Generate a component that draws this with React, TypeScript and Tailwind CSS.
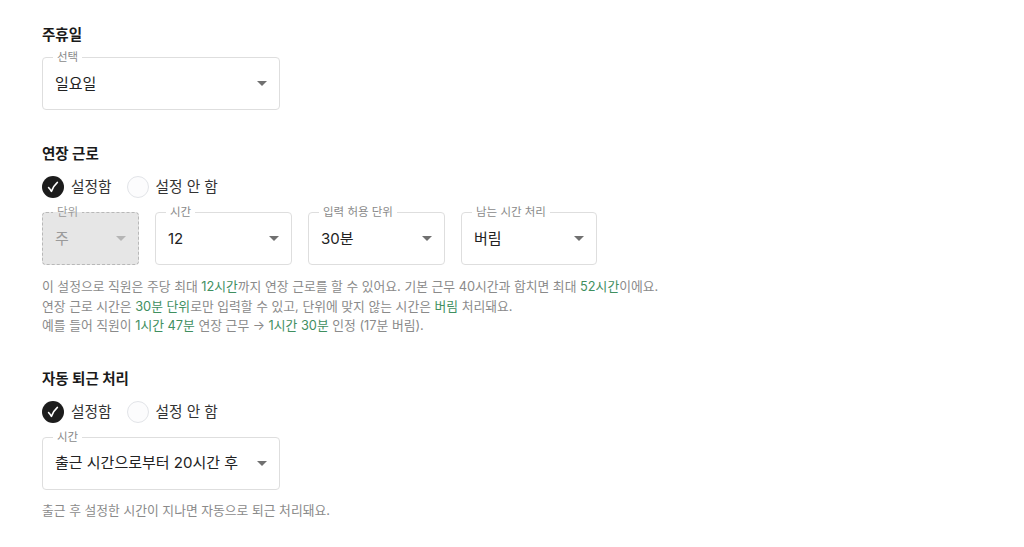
import React from "react";

type SelectProps = {
  label: string;
  value: string;
  width: string;
  disabled?: boolean;
};

function Arrow({ disabled }: { disabled?: boolean }) {
  return (
    <svg width="10" height="5" viewBox="0 0 10 5" className="shrink-0">
      <path d="M0 0 L10 0 L5 5 Z" fill={disabled ? "#b5b5b5" : "#707070"} />
    </svg>
  );
}

function OutlinedSelect({ label, value, width, disabled }: SelectProps) {
  return (
    <div
      className={`relative h-[53px] ${width} rounded-[4px] flex items-center justify-between pl-[12px] pr-[12px] ${
        disabled
          ? "border border-dashed border-[#b8b8b8] bg-[#e6e6e6]"
          : "border border-[#dedede] bg-white"
      }`}
    >
      <span
        className={`absolute -top-[8px] left-[10px] px-[4px] text-[11.5px] leading-[14px] ${
          disabled
            ? "text-[#9a9a9a] bg-[linear-gradient(to_bottom,white_50%,#e6e6e6_50%)]"
            : "text-[#8a8a8a] bg-white"
        }`}
      >
        {label}
      </span>
      <span
        className={`text-[15px] leading-[20px] ${
          disabled ? "text-[#9a9a9a]" : "text-[#222]"
        }`}
      >
        {value}
      </span>
      <Arrow disabled={disabled} />
    </div>
  );
}

function RadioRow() {
  return (
    <div className="flex items-center h-[24px]">
      <span className="w-[22px] h-[22px] rounded-full bg-[#1c1c1c] flex items-center justify-center">
        <svg width="14" height="14" viewBox="0 0 14 14">
          <path
            d="M2.6 7.6 C3.6 8.4 4.6 9.8 5.4 11.4 C6.8 7.8 8.6 4.8 11.4 2.4"
            fill="none"
            stroke="white"
            strokeWidth="1.6"
            strokeLinecap="round"
            strokeLinejoin="round"
          />
        </svg>
      </span>
      <span className="ml-[7px] text-[14.7px] leading-[20px] text-[#333]">설정함</span>
      <span className="ml-[15px] w-[22px] h-[22px] rounded-full border border-[#e2e4e8] bg-[#fcfcfd]" />
      <span className="ml-[7px] text-[14.7px] leading-[20px] text-[#333]">설정 안 함</span>
    </div>
  );
}

function G({ children }: { children: React.ReactNode }) {
  return <span className="text-[#3f8f5f]">{children}</span>;
}

export default function App() {
  return (
    <div className="min-h-screen bg-white font-[Inter,'Noto_Sans_CJK_KR',sans-serif] px-[42px] pt-[25px]">
      {/* 주휴일 */}
      <h2 className="text-[14.5px] leading-[20px] font-bold text-[#1a1a1a]">주휴일</h2>
      <div className="mt-[12px]">
        <OutlinedSelect label="선택" value="일요일" width="w-[238px]" />
      </div>

      {/* 연장 근로 */}
      <h2 className="mt-[34px] text-[14.5px] leading-[20px] font-bold text-[#1a1a1a]">연장 근로</h2>
      <div className="mt-[11px]">
        <RadioRow />
      </div>
      <div className="mt-[13px] flex gap-[16px]">
        <OutlinedSelect label="단위" value="주" width="w-[97px]" disabled />
        <OutlinedSelect label="시간" value="12" width="w-[137px]" />
        <OutlinedSelect label="입력 허용 단위" value="30분" width="w-[137px]" />
        <OutlinedSelect label="남는 시간 처리" value="버림" width="w-[136px]" />
      </div>
      <div className="mt-[12px] text-[12.8px] leading-[19.5px] text-[#8a8a8a]">
        <p>
          이 설정으로 직원은 주당 최대 <G>12시간</G>까지 연장 근로를 할 수 있어요. 기본 근무 40시간과 합치면 최대{" "}
          <G>52시간</G>이에요.
        </p>
        <p>
          연장 근로 시간은 <G>30분 단위</G>로만 입력할 수 있고, 단위에 맞지 않는 시간은 <G>버림</G> 처리돼요.
        </p>
        <p>
          예를 들어 직원이 <G>1시간 47분</G> 연장 근무 → <G>1시간 30분</G> 인정 (17분 버림).
        </p>
      </div>

      {/* 자동 퇴근 처리 */}
      <h2 className="mt-[33px] text-[14.5px] leading-[20px] font-bold text-[#1a1a1a]">자동 퇴근 처리</h2>
      <div className="mt-[11px]">
        <RadioRow />
      </div>
      <div className="mt-[13px]">
        <OutlinedSelect label="시간" value="출근 시간으로부터 20시간 후" width="w-[238px]" />
      </div>
      <p className="mt-[11px] text-[12.8px] leading-[19.5px] text-[#8a8a8a]">
        출근 후 설정한 시간이 지나면 자동으로 퇴근 처리돼요.
      </p>
    </div>
  );
}
